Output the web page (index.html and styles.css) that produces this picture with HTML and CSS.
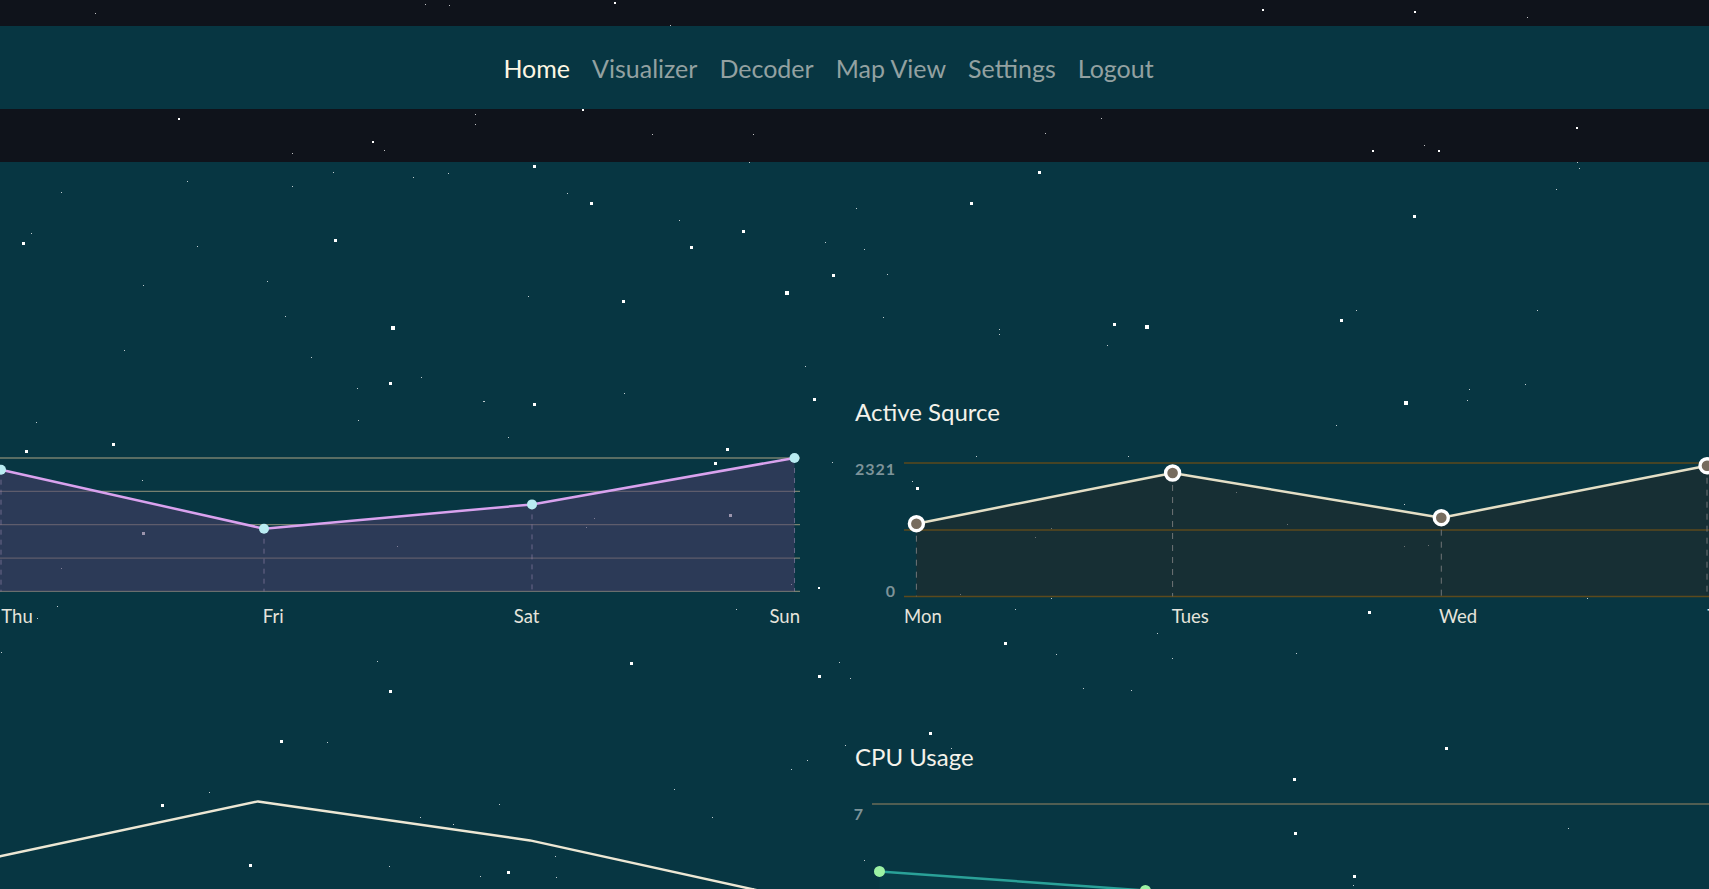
FILE: index.html
```html
<!DOCTYPE html>
<html lang="en">
<head>
<meta charset="utf-8">
<title>Dashboard</title>
<link rel="stylesheet" href="styles.css">
</head>
<body>
<div class="stars" aria-hidden="true">
<span class="star s1" style="left:95px;top:13px"></span>
<span class="star s1" style="left:425px;top:4px"></span>
<span class="star s1" style="left:449px;top:5px"></span>
<span class="star s2" style="left:614px;top:2px"></span>
<span class="star s1" style="left:670px;top:25px"></span>
<span class="star s2" style="left:1262px;top:9px"></span>
<span class="star s2" style="left:1414px;top:11px"></span>
<span class="star s1" style="left:1527px;top:17px"></span>
<span class="star s2" style="left:178px;top:118px"></span>
<span class="star s1" style="left:475px;top:114px"></span>
<span class="star s1" style="left:475px;top:124px"></span>
<span class="star s2" style="left:582px;top:109px"></span>
<span class="star s2" style="left:372px;top:141px"></span>
<span class="star s1" style="left:384px;top:150px"></span>
<span class="star s1" style="left:292px;top:153px"></span>
<span class="star s1" style="left:652px;top:134px"></span>
<span class="star s1" style="left:753px;top:134px"></span>
<span class="star s1" style="left:1101px;top:118px"></span>
<span class="star s1" style="left:1045px;top:133px"></span>
<span class="star s2" style="left:1576px;top:127px"></span>
<span class="star s2" style="left:1372px;top:150px"></span>
<span class="star s2" style="left:1438px;top:150px"></span>
<span class="star s1" style="left:1424px;top:145px"></span>
<span class="star s1" style="left:1577px;top:162px"></span>
<span class="star s3" style="left:533px;top:165px"></span>
<span class="star s1" style="left:333px;top:172px"></span>
<span class="star s1" style="left:413px;top:177px"></span>
<span class="star s1" style="left:448px;top:173px"></span>
<span class="star s1" style="left:187px;top:181px"></span>
<span class="star s1" style="left:292px;top:186px"></span>
<span class="star s1" style="left:61px;top:192px"></span>
<span class="star s1" style="left:567px;top:193px"></span>
<span class="star s1" style="left:31px;top:233px"></span>
<span class="star s3" style="left:22px;top:242px"></span>
<span class="star s1" style="left:197px;top:246px"></span>
<span class="star s3" style="left:334px;top:239px"></span>
<span class="star s1" style="left:143px;top:285px"></span>
<span class="star s1" style="left:267px;top:281px"></span>
<span class="star s1" style="left:528px;top:296px"></span>
<span class="star s1" style="left:285px;top:316px"></span>
<span class="star s4" style="left:391px;top:326px"></span>
<span class="star s1" style="left:124px;top:350px"></span>
<span class="star s1" style="left:311px;top:357px"></span>
<span class="star s1" style="left:421px;top:377px"></span>
<span class="star s3" style="left:389px;top:382px"></span>
<span class="star s1" style="left:357px;top:388px"></span>
<span class="star s1" style="left:483px;top:401px"></span>
<span class="star s3" style="left:533px;top:403px"></span>
<span class="star s1" style="left:749px;top:162px"></span>
<span class="star s3" style="left:1038px;top:171px"></span>
<span class="star s3" style="left:590px;top:202px"></span>
<span class="star s3" style="left:970px;top:202px"></span>
<span class="star s1" style="left:856px;top:208px"></span>
<span class="star s1" style="left:679px;top:220px"></span>
<span class="star s3" style="left:742px;top:230px"></span>
<span class="star s3" style="left:690px;top:246px"></span>
<span class="star s1" style="left:825px;top:242px"></span>
<span class="star s1" style="left:864px;top:249px"></span>
<span class="star s3" style="left:832px;top:274px"></span>
<span class="star s1" style="left:887px;top:274px"></span>
<span class="star s4" style="left:785px;top:291px"></span>
<span class="star s3" style="left:622px;top:300px"></span>
<span class="star s1" style="left:883px;top:317px"></span>
<span class="star s1" style="left:999px;top:329px"></span>
<span class="star s1" style="left:999px;top:334px"></span>
<span class="star s3" style="left:1113px;top:323px"></span>
<span class="star s1" style="left:1107px;top:345px"></span>
<span class="star s1" style="left:805px;top:366px"></span>
<span class="star s1" style="left:624px;top:393px"></span>
<span class="star s3" style="left:813px;top:398px"></span>
<span class="star s1" style="left:1579px;top:168px"></span>
<span class="star s1" style="left:1556px;top:189px"></span>
<span class="star s3" style="left:1413px;top:215px"></span>
<span class="star s1" style="left:1356px;top:310px"></span>
<span class="star s1" style="left:1537px;top:310px"></span>
<span class="star s4" style="left:1145px;top:325px"></span>
<span class="star s3" style="left:1340px;top:319px"></span>
<span class="star s1" style="left:1469px;top:389px"></span>
<span class="star s1" style="left:1525px;top:384px"></span>
<span class="star s4" style="left:1404px;top:401px"></span>
<span class="star s1" style="left:1467px;top:400px"></span>
<span class="star s1" style="left:484px;top:401px"></span>
<span class="star s1" style="left:36px;top:422px"></span>
<span class="star s1" style="left:358px;top:420px"></span>
<span class="star s3" style="left:112px;top:443px"></span>
<span class="star s3" style="left:25px;top:450px"></span>
<span class="star s1" style="left:508px;top:437px"></span>
<span class="star s3" style="left:726px;top:448px"></span>
<span class="star s3" style="left:714px;top:462px"></span>
<span class="star s1" style="left:142px;top:480px"></span>
<span class="star s3" style="left:142px;top:532px"></span>
<span class="star s1" style="left:594px;top:518px"></span>
<span class="star s1" style="left:586px;top:527px"></span>
<span class="star s3" style="left:729px;top:514px"></span>
<span class="star s1" style="left:397px;top:546px"></span>
<span class="star s1" style="left:61px;top:568px"></span>
<span class="star s1" style="left:791px;top:584px"></span>
<span class="star s2" style="left:818px;top:587px"></span>
<span class="star s1" style="left:1336px;top:425px"></span>
<span class="star s1" style="left:976px;top:456px"></span>
<span class="star s1" style="left:1128px;top:456px"></span>
<span class="star s1" style="left:832px;top:462px"></span>
<span class="star s1" style="left:912px;top:481px"></span>
<span class="star s3" style="left:916px;top:487px"></span>
<span class="star s1" style="left:1236px;top:492px"></span>
<span class="star s1" style="left:1287px;top:524px"></span>
<span class="star s1" style="left:1051px;top:528px"></span>
<span class="star s1" style="left:1035px;top:537px"></span>
<span class="star s1" style="left:1404px;top:504px"></span>
<span class="star s1" style="left:1404px;top:546px"></span>
<span class="star s1" style="left:1428px;top:545px"></span>
<span class="star s1" style="left:960px;top:594px"></span>
<span class="star s1" style="left:1051px;top:598px"></span>
<span class="star s1" style="left:1587px;top:598px"></span>
<span class="star s1" style="left:1015px;top:609px"></span>
<span class="star s3" style="left:1368px;top:611px"></span>
<span class="star s1" style="left:1157px;top:633px"></span>
<span class="star s1" style="left:57px;top:606px"></span>
<span class="star s1" style="left:37px;top:618px"></span>
<span class="star s1" style="left:736px;top:609px"></span>
<span class="star s1" style="left:1px;top:652px"></span>
<span class="star s1" style="left:377px;top:661px"></span>
<span class="star s3" style="left:630px;top:662px"></span>
<span class="star s3" style="left:389px;top:690px"></span>
<span class="star s1" style="left:839px;top:662px"></span>
<span class="star s3" style="left:818px;top:675px"></span>
<span class="star s1" style="left:850px;top:678px"></span>
<span class="star s3" style="left:1004px;top:642px"></span>
<span class="star s1" style="left:1056px;top:654px"></span>
<span class="star s1" style="left:1172px;top:658px"></span>
<span class="star s1" style="left:1296px;top:653px"></span>
<span class="star s1" style="left:1083px;top:688px"></span>
<span class="star s1" style="left:1131px;top:690px"></span>
<span class="star s3" style="left:929px;top:732px"></span>
<span class="star s1" style="left:845px;top:745px"></span>
<span class="star s1" style="left:951px;top:748px"></span>
<span class="star s3" style="left:1445px;top:747px"></span>
<span class="star s3" style="left:1293px;top:778px"></span>
<span class="star s3" style="left:1294px;top:832px"></span>
<span class="star s1" style="left:1568px;top:828px"></span>
<span class="star s1" style="left:864px;top:860px"></span>
<span class="star s3" style="left:1353px;top:875px"></span>
<span class="star s1" style="left:1353px;top:885px"></span>
<span class="star s3" style="left:280px;top:740px"></span>
<span class="star s1" style="left:327px;top:742px"></span>
<span class="star s1" style="left:209px;top:792px"></span>
<span class="star s3" style="left:161px;top:804px"></span>
<span class="star s1" style="left:499px;top:804px"></span>
<span class="star s1" style="left:420px;top:817px"></span>
<span class="star s1" style="left:453px;top:824px"></span>
<span class="star s1" style="left:674px;top:789px"></span>
<span class="star s1" style="left:712px;top:817px"></span>
<span class="star s1" style="left:807px;top:760px"></span>
<span class="star s1" style="left:791px;top:769px"></span>
<span class="star s3" style="left:249px;top:864px"></span>
<span class="star s1" style="left:389px;top:866px"></span>
<span class="star s3" style="left:507px;top:871px"></span>
<span class="star s1" style="left:480px;top:876px"></span>
<span class="star s1" style="left:555px;top:856px"></span>
<span class="star s1" style="left:556px;top:877px"></span>
<span class="star s1" style="left:753px;top:888px"></span>
</div>

<header class="site-header">
  <nav class="nav">
    <a class="nav-link is-active" href="#">Home</a>
    <a class="nav-link" href="#">Visualizer</a>
    <a class="nav-link" href="#">Decoder</a>
    <a class="nav-link" href="#">Map View</a>
    <a class="nav-link" href="#">Settings</a>
    <a class="nav-link" href="#">Logout</a>
  </nav>
</header>

<main class="main">
  <div class="charts">
    <!-- top left -->
    <section class="panel">
      <h3 class="panel-title">Packets Received</h3>
      <div class="plot-row">
        <div class="yaxis"><span>5</span><span>0</span></div>
        <svg class="plot" width="1602" height="140" viewBox="0 0 1602 140">
          <g class="grid-violet">
            <line x1="0" y1="0" x2="1602" y2="0"/>
            <line x1="0" y1="33.35" x2="1602" y2="33.35"/>
            <line x1="0" y1="66.7" x2="1602" y2="66.7"/>
            <line x1="0" y1="100.05" x2="1602" y2="100.05"/>
            <line x1="0" y1="133.4" x2="1602" y2="133.4"/>
          </g>
          <polygon class="fill-violet" points="12.4,133.4 12.4,40 268.6,90 537.3,25 803,11.7 1066,70.7 1334,46.4 1596.5,0 1596.5,133.4"/>
          <g class="drop-violet">
            <line x1="12.4" y1="40" x2="12.4" y2="133.4"/>
            <line x1="268.6" y1="90" x2="268.6" y2="133.4"/>
            <line x1="537.3" y1="25" x2="537.3" y2="133.4"/>
            <line x1="803" y1="11.7" x2="803" y2="133.4"/>
            <line x1="1066" y1="70.7" x2="1066" y2="133.4"/>
            <line x1="1334" y1="46.4" x2="1334" y2="133.4"/>
            <line x1="1596.5" y1="0" x2="1596.5" y2="133.4"/>
          </g>
          <polyline class="line-violet" points="12.4,40 268.6,90 537.3,25 803,11.7 1066,70.7 1334,46.4 1596.5,0"/>
          <g class="dot-cyan">
            <circle cx="12.4" cy="40" r="5"/>
            <circle cx="268.6" cy="90" r="5"/>
            <circle cx="537.3" cy="25" r="5"/>
            <circle cx="803" cy="11.7" r="5"/>
            <circle cx="1066" cy="70.7" r="5"/>
            <circle cx="1334" cy="46.4" r="5"/>
            <circle cx="1596.5" cy="0" r="5"/>
          </g>
        </svg>
      </div>
      <div class="xaxis"><span>Mon</span><span>Tues</span><span>Wed</span><span>Thu</span><span>Fri</span><span>Sat</span><span>Sun</span></div>
    </section>

    <!-- top right -->
    <section class="panel">
      <h3 class="panel-title">Active Squrce</h3>
      <div class="plot-row">
        <div class="yaxis"><span>2321</span><span>0</span></div>
        <svg class="plot" width="1602" height="140" viewBox="0 0 1602 140">
          <polygon class="fill-sand" points="12.4,138.4 12.4,65.7 268.6,15 537.3,59.7 803,7.7 1066,50 1334,30 1596.5,70 1596.5,138.4"/>
          <g class="grid-brown">
            <line x1="0" y1="5" x2="1602" y2="5"/>
            <line x1="0" y1="72" x2="1602" y2="72"/>
            <line x1="0" y1="138.4" x2="1602" y2="138.4"/>
          </g>
          <g class="drop-gray">
            <line x1="12.4" y1="65.7" x2="12.4" y2="138.4"/>
            <line x1="268.6" y1="15" x2="268.6" y2="138.4"/>
            <line x1="537.3" y1="59.7" x2="537.3" y2="138.4"/>
            <line x1="803" y1="7.7" x2="803" y2="138.4"/>
            <line x1="1066" y1="50" x2="1066" y2="138.4"/>
            <line x1="1334" y1="30" x2="1334" y2="138.4"/>
            <line x1="1596.5" y1="70" x2="1596.5" y2="138.4"/>
          </g>
          <polyline class="line-sand" points="12.4,65.7 268.6,15 537.3,59.7 803,7.7 1066,50 1334,30 1596.5,70"/>
          <g class="dot-ring">
            <circle cx="12.4" cy="65.7" r="7"/>
            <circle cx="268.6" cy="15" r="7"/>
            <circle cx="537.3" cy="59.7" r="7"/>
            <circle cx="803" cy="7.7" r="7"/>
            <circle cx="1066" cy="50" r="7"/>
            <circle cx="1334" cy="30" r="7"/>
            <circle cx="1596.5" cy="70" r="7"/>
          </g>
        </svg>
      </div>
      <div class="xaxis"><span>Mon</span><span>Tues</span><span>Wed</span><span>Thu</span><span>Fri</span><span>Sat</span><span>Sun</span></div>
    </section>

    <!-- bottom left -->
    <section class="panel">
      <h3 class="panel-title">Memory Usage</h3>
      <div class="plot-row">
        <div class="yaxis"><span>9</span><span>0</span></div>
        <svg class="plot" width="1602" height="140" viewBox="0 0 1602 140">
          <polyline class="line-cream" points="12.4,70 268.6,40 537.3,85 802,53.4 1060,-1.6 1332,37.4 1596,95.3"/>
        </svg>
      </div>
    </section>

    <!-- bottom right -->
    <section class="panel">
      <h3 class="panel-title">CPU Usage</h3>
      <div class="plot-row">
        <div class="yaxis yaxis-narrow"><span>7</span><span>0</span></div>
        <svg class="plot" width="1634" height="140" viewBox="0 0 1634 140">
          <polygon class="fill-teal" points="7.5,138.4 7.5,68.4 273.4,87.5 540,110 805,120 1072,100 1340,115 1626,105 1626,138.4"/>
          <line class="grid-olive" x1="0" y1="1" x2="1634" y2="1"/>
          <polyline class="line-teal" points="7.5,68.4 273.4,87.5 540,110 805,120 1072,100 1340,115 1626,105"/>
          <g class="dot-green">
            <circle cx="7.5" cy="68.4" r="5.5"/>
            <circle cx="273.4" cy="87.5" r="5.5"/>
            <circle cx="540" cy="110" r="5.5"/>
            <circle cx="805" cy="120" r="5.5"/>
            <circle cx="1072" cy="100" r="5.5"/>
            <circle cx="1340" cy="115" r="5.5"/>
            <circle cx="1626" cy="105" r="5.5"/>
          </g>
        </svg>
      </div>
    </section>
  </div>
</main>
</body>
</html>
```

FILE: styles.css
```css
html, body {
  margin: 0;
  padding: 0;
  overflow: hidden;
}

body {
  position: relative;
  min-height: 889px;
  background: #0f131b;
  font-family: Lato, "Noto Sans", sans-serif;
  color: #eee8d5;
}

/* ---------- star field ---------- */
.stars {
  position: absolute;
  inset: 0;
  z-index: 0;
  pointer-events: none;
}
.star {
  position: absolute;
  display: block;
  background: #ffffff;
}
.s1 { width: 1px; height: 1px; opacity: 0.75; }
.s2 { width: 2px; height: 2px; }
.s3 { width: 3px; height: 3px; }
.s4 { width: 4px; height: 4px; }

/* ---------- header ---------- */
.site-header {
  padding: 26px 0 53px;
}
.nav {
  position: relative;
  z-index: 1;
  height: 83px;
  display: flex;
  align-items: center;
  justify-content: center;
  gap: 22px;
  padding-right: 52px;
  background: #073642;
}
.nav-link {
  font-size: 25px;
  line-height: 30px;
  color: #93a1a1;
  text-decoration: none;
}
.nav-link.is-active {
  color: #fdf6e3;
}

/* ---------- main ---------- */
.main {
  background: #073642;
  padding-top: 236px;
  min-height: 600px;
}

.charts {
  position: relative;
  z-index: 1;
  display: grid;
  grid-template-columns: 1651px 1651px;
  column-gap: 55px;
  row-gap: 117px;
  margin-left: -851px;
}

.panel {
  display: flex;
  flex-direction: column;
}

.panel-title {
  margin: 0 0 32px;
  font-size: 24px;
  line-height: 28px;
  font-weight: 400;
  color: #f4f2ea;
}

.plot-row {
  display: flex;
  align-items: flex-start;
  gap: 8px;
}

.yaxis {
  width: 41px;
  height: 140px;
  box-sizing: border-box;
  padding-top: 3px;
  display: flex;
  flex-direction: column;
  justify-content: space-between;
  align-items: flex-end;
  font-size: 16px;
  line-height: 15px;
  font-weight: 700;
  letter-spacing: 1px;
  color: #7d9399;
}
.yaxis-narrow {
  width: 9px;
}

.plot {
  display: block;
  overflow: visible;
  flex: none;
}

.xaxis {
  display: flex;
  justify-content: space-between;
  margin-left: 49px;
  margin-top: 8px;
  font-size: 18.5px;
  line-height: 20px;
  color: #e6e4dc;
}

/* ---------- chart strokes ---------- */
.grid-violet line { stroke: #76806f; stroke-width: 1.3; }
.fill-violet { fill: rgba(75, 62, 105, 0.55); }
.drop-violet line { stroke: rgba(160, 140, 180, 0.55); stroke-width: 1; stroke-dasharray: 5 5; }
.line-violet { fill: none; stroke: #d9a2ee; stroke-width: 2.5; stroke-linejoin: round; }
.dot-cyan circle { fill: #b9ecf2; }

.fill-sand { fill: rgba(36, 42, 42, 0.55); }
.grid-brown line { stroke: #5c4a1c; stroke-width: 1.5; }
.drop-gray line { stroke: #707476; stroke-width: 1; stroke-dasharray: 6 6; }
.line-sand { fill: none; stroke: #e4dfc6; stroke-width: 2.5; stroke-linejoin: round; }
.dot-ring circle { fill: #776c5e; stroke: #ffffff; stroke-width: 3.4; }

.line-cream { fill: none; stroke: #ece7d4; stroke-width: 2.5; stroke-linejoin: round; }

.fill-teal { fill: rgba(42, 161, 152, 0.06); }
.grid-olive { stroke: #6b6c58; stroke-width: 1.5; }
.line-teal { fill: none; stroke: #2aa198; stroke-width: 2.5; stroke-linejoin: round; }
.dot-green circle { fill: #9cf2a4; }
```
